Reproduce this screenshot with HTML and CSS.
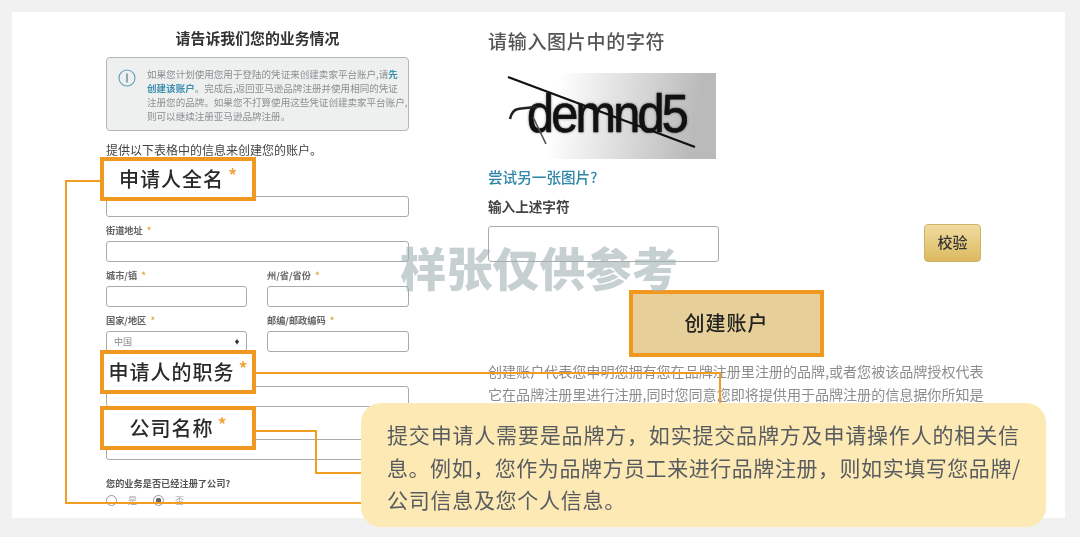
FILE: index.html
```html
<!DOCTYPE html>
<html lang="zh-CN">
<head>
<meta charset="utf-8">
<title>品牌注册</title>
<link rel="stylesheet" href="styles.css">
</head>
<body>
<div class="stage">
  <main class="panel">
    <section class="left">
      <h2 class="form-title">请告诉我们您的业务情况</h2>
      <div class="info">
        <svg class="info-icon" viewBox="0 0 18 18" width="18" height="18"><circle cx="9" cy="9" r="8" fill="none" stroke="#5b9dbb" stroke-width="1.1"/><path d="M9 4.5v9" stroke="#3f6f86" stroke-width="1.1"/></svg>
        <p>如果您计划使用您用于登陆的凭证来创建卖家平台账户,请<a>先</a><br><a>创建该账户</a>。完成后,返回亚马逊品牌注册并使用相同的凭证<br>注册您的品牌。如果您不打算使用这些凭证创建卖家平台账户,<br>则可以继续注册亚马逊品牌注册。</p>
      </div>
      <p class="intro">提供以下表格中的信息来创建您的账户。</p>
      <div class="field first"><input class="box" type="text"></div>
      <div class="field"><label class="lab">街道地址 <i>*</i></label><input class="box" type="text"></div>
      <div class="row">
        <div class="field"><label class="lab">城市/镇 <i>*</i></label><input class="box" type="text"></div>
        <div class="field"><label class="lab">州/省/省份 <i>*</i></label><input class="box" type="text"></div>
      </div>
      <div class="row">
        <div class="field"><label class="lab">国家/地区 <i>*</i></label><div class="box select"><span>中国</span><b>♦</b></div></div>
        <div class="field"><label class="lab">邮编/邮政编码 <i>*</i></label><input class="box" type="text"></div>
      </div>
      <div class="field job"><input class="box" type="text"></div>
      <div class="field company"><input class="box" type="text"></div>
      <p class="question">您的业务是否已经注册了公司?</p>
      <div class="radios">
        <span class="radio"></span><span class="opt">是</span>
        <span class="radio on"></span><span class="opt">否</span>
      </div>
    </section>
    <section class="right">
      <h2 class="cap-title">请输入图片中的字符</h2>
      <div class="captcha">
        <span class="cap-text">demnd5</span>
        <svg class="cap-lines" viewBox="0 0 211 86" width="211" height="86"><path d="M3 4L190 74" stroke="#111" stroke-width="2.4" fill="none"/><path d="M5 46Q7 37 13 36T32 34" stroke="#222" stroke-width="2.6" fill="none"/><path d="M28 44L41 71" stroke="#555" stroke-width="1.7" fill="none"/></svg>
      </div>
      <a class="retry">尝试另一张图片?</a>
      <label class="cap-label">输入上述字符</label>
      <div class="cap-row">
        <input class="cap-input" type="text">
        <button class="verify" type="button">校验</button>
      </div>
      <button class="create" type="button">创建账户</button>
      <p class="legal">创建账户代表您申明您拥有您在品牌注册里注册的品牌,或者您被该品牌授权代表<br>它在品牌注册里进行注册,同时您同意您即将提供用于品牌注册的信息据你所知是</p>
    </section>
  </main>

  <div class="watermark">样张仅供参考</div>

  <svg class="wires" viewBox="0 0 1080 537" width="1080" height="537">
    <path d="M101 181H66V503H362M256 373H720V404M256 431H316V473H362" fill="none" stroke="#f29c24" stroke-width="2"/>
  </svg>

  <div class="tag tag-name">申请人全名<i>*</i></div>
  <div class="tag tag-job">申请人的职务<i>*</i></div>
  <div class="tag tag-company">公司名称<i>*</i></div>

  <div class="note"><span class="l1">提交申请人需要是品牌方，如实提交品牌方及申请操作人的相关信</span><br><span class="l2">息。例如，您作为品牌方员工来进行品牌注册，则如实填写您品牌/</span><br>公司信息及您个人信息。</div>
</div>
</body>
</html>
```
FILE: styles.css
```css
* { box-sizing: border-box; }
html, body { margin: 0; height: 100%; }
body {
  background: #f1f1f1;
  font-family: "Noto Sans CJK SC", "Liberation Sans", sans-serif;
  overflow: hidden;
}
h2, p { margin: 0; font-weight: normal; }
.stage { position: relative; width: 1080px; height: 537px; padding: 12px 15px 19px 12px; filter: blur(.4px); }
.panel { display: flex; height: 506px; background: #fff; overflow: hidden; }

/* left form */
.left { width: 303px; margin-left: 94px; padding-top: 16px; flex: none; }
.form-title { font-size: 14.9px; line-height: 20px; font-weight: 700; color: #333; text-align: center; }
.info {
  display: flex; height: 74px; margin-top: 9px; padding: 9px 0 0 11px; gap: 11px;
  background: #eef0f0; border: 1px solid #b4b6b6; border-radius: 4px;
}
.info-icon { margin-top: 2px; flex: none; }
.info p { font-size: 9.55px; line-height: 14px; color: #8b8f91; white-space: nowrap; }
.info a { color: #3d8fb0; font-weight: 700; }
.intro { margin-top: 11px; font-size: 12px; line-height: 16px; color: #444; }
.field { display: flex; flex-direction: column; margin-top: 7px; }
.field.first { margin-top: 38px; }
.field.job { margin-top: 34px; }
.field.company { margin-top: 32px; }
.lab { height: 12px; margin-bottom: 5px; font-size: 9.2px; line-height: 12px; font-weight: 700; color: #666; white-space: nowrap; }
.lab i { font-style: normal; color: #e8a33a; margin-left: 2px; }
.box { display: block; width: 100%; height: 21px; padding: 0; background: #fff; border: 1px solid #a9abab; border-radius: 3px; }
.row { display: grid; grid-template-columns: 141px 142px; column-gap: 20px; }
.select { display: flex; align-items: center; justify-content: space-between; padding: 0 6px 0 7px; font-size: 9px; color: #888; }
.select b { font-size: 6px; color: #333; }
.question { margin-top: 17px; font-size: 9.2px; line-height: 12px; font-weight: 700; color: #555; white-space: nowrap; }
.radios { display: flex; align-items: center; margin-top: 5px; height: 12px; font-size: 9px; color: #999; }
.radio { width: 11px; height: 11px; border: 1px solid #999; border-radius: 50%; background: #fff; }
.radio.on { background: radial-gradient(circle, #666 0 2.5px, #fff 3px); }
.opt { margin: 0 16px 0 11px; }

/* right column */
.right { margin-left: 79px; padding-top: 16px; width: 497px; flex: none; }
.cap-title { font-size: 19px; line-height: 26px; letter-spacing: .7px; font-weight: 500; color: #555; white-space: nowrap; }
.captcha {
  position: relative; width: 211px; height: 86px; margin: 19px 0 0 17px; overflow: hidden;
  background: linear-gradient(100deg, #fff 0 24%, #dedede 55%, #bababa 88%);
}
.cap-text {
  position: absolute; left: 22px; top: 12px; font-family: "Liberation Sans", sans-serif; font-size: 54px; line-height: 56px;
  letter-spacing: -3.1px; color: #111; -webkit-text-stroke: .7px #111; text-shadow: 0 0 3px rgba(0, 0, 0, .6); white-space: nowrap;
  transform: scaleX(.9); transform-origin: left center;
}
.cap-lines { position: absolute; left: 0; top: 0; }
.retry { display: block; margin-top: 8px; font-size: 14.6px; line-height: 20px; font-weight: 500; color: #2f86a8; }
.cap-label { display: block; margin-top: 10px; font-size: 13.6px; line-height: 18px; font-weight: 700; color: #444; }
.cap-row { display: flex; justify-content: space-between; align-items: flex-end; width: 493px; margin-top: 9px; }
.cap-input { width: 231px; height: 36px; background: transparent; border: 1px solid #a9abab; border-radius: 3px; }
.verify {
  width: 57px; height: 38px; padding: 0 0 3px; font: inherit; font-size: 15px; font-weight: 500; color: #333; cursor: pointer;
  background: linear-gradient(#f0dca0, #dcb95f); border: 1px solid #cdb26a; border-radius: 4px;
}
.create {
  display: block; width: 195px; height: 67px; margin: 28px 0 0 141px; padding: 0 0 3px;
  font: inherit; font-size: 20px; font-weight: 500; letter-spacing: 1px; color: #222;
  background: #e6cf98; border: 4px solid #f0981f;
}
.legal { margin-top: 3px; font-size: 14.05px; line-height: 23px; color: #8d8d8d; white-space: nowrap; }

/* overlays */
.watermark {
  position: absolute; left: 400px; top: 236px; font-size: 46px; line-height: 60px; font-weight: 900; letter-spacing: .4px;
  color: rgba(160, 176, 176, .6); white-space: nowrap;
}
.wires { position: absolute; left: 0; top: 0; }
.tag {
  position: absolute; left: 100px; width: 156px; height: 44px;
  display: flex; align-items: center; justify-content: center;
  background: #fff; border: 4px solid #f0981f; padding-left: 1px;
  font-size: 20px; letter-spacing: 1px; line-height: 34px; font-weight: 500; color: #2a2a2a; white-space: nowrap;
}
.tag i { margin: -8px 0 0 4px; font-style: normal; font-size: 19px; color: #f0a030; }
.tag-name { top: 157px; }
.tag-job { top: 350px; }
.tag-company { top: 406px; }
.note {
  position: absolute; left: 361px; top: 403px; width: 685px; height: 124px; padding: 15px 0 0 26px;
  background: #fde9b4; border-radius: 20px; white-space: nowrap;
  font-size: 21px; line-height: 32.5px; letter-spacing: .72px; color: #585c60;
}
.note .l1 { letter-spacing: .82px; }
.note .l2 { letter-spacing: .55px; }
```
